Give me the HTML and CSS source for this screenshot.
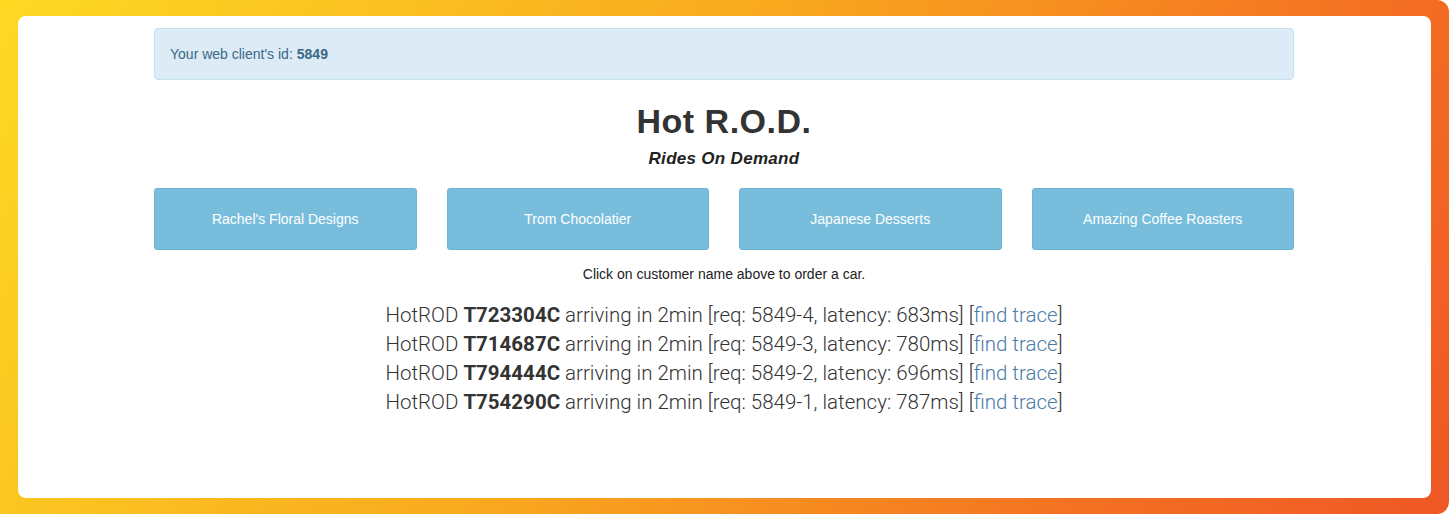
FILE: index.html
```html
<!DOCTYPE html>
<html>
<head>
<meta charset="utf-8">
<link rel="stylesheet" href="styles.css">
<title>Hot R.O.D.</title>
</head>
<body>
<div class="card">
  <div class="container">
    <div class="alert">Your web client's id: <strong>5849</strong></div>
    <h1 class="title">Hot R.O.D.</h1>
    <h4 class="subtitle">Rides On Demand</h4>
    <div class="customers">
      <button class="btn">Rachel's Floral Designs</button>
      <button class="btn">Trom Chocolatier</button>
      <button class="btn">Japanese Desserts</button>
      <button class="btn">Amazing Coffee Roasters</button>
    </div>
    <p class="hint">Click on customer name above to order a car.</p>
    <div class="log">
      <div class="entry">HotROD <b>T723304C</b> arriving in 2min [req: 5849-4, latency: 683ms] [<a href="#">find trace</a>]</div>
      <div class="entry">HotROD <b>T714687C</b> arriving in 2min [req: 5849-3, latency: 780ms] [<a href="#">find trace</a>]</div>
      <div class="entry">HotROD <b>T794444C</b> arriving in 2min [req: 5849-2, latency: 696ms] [<a href="#">find trace</a>]</div>
      <div class="entry">HotROD <b>T754290C</b> arriving in 2min [req: 5849-1, latency: 787ms] [<a href="#">find trace</a>]</div>
    </div>
  </div>
</div>
</body>
</html>
```

FILE: styles.css
```css
* { box-sizing: border-box; }
html { background: #fff; }
body {
  margin: 0;
  height: 514px;
  padding: 16px 18px;
  border-radius: 0 12px 12px 0;
  background: linear-gradient(120deg, #fdd923 0%, #f9a81e 45%, #f46f22 80%, #ef5725 100%);
  font-family: "Liberation Sans", Arial, sans-serif;
  font-size: 14px;
  color: #333;
}
.card {
  background: #fff;
  border-radius: 8px;
  height: 482px;
  padding: 12px 137px 0 136px;
}
.container {
  width: 1140px;
}
.alert {
  height: 52px;
  display: flex;
  align-items: center;
  padding: 0 15px;
  background: #dcebf6;
  border: 1px solid #c4e1ee;
  border-radius: 4px;
  color: #3a6886;
  font-size: 14px;
}
.alert strong { margin-left: 4px; }
.title {
  margin: 21px 0 0;
  text-align: center;
  font-size: 34px;
  font-weight: 700;
  letter-spacing: 0.5px;
  line-height: 40px;
  color: #333;
}
.subtitle {
  margin: 8px 0 0;
  text-align: center;
  font-size: 17px;
  font-style: italic;
  font-weight: 700;
  letter-spacing: 0.3px;
  line-height: 20px;
  color: #222;
}
.customers {
  display: grid;
  grid-template-columns: repeat(4, 1fr);
  gap: 30px;
  margin-top: 19px;
}
.btn {
  height: 62px;
  border: 1px solid #6cb4d4;
  border-radius: 3px;
  background: #78bedc;
  color: #fff;
  font-family: "Liberation Sans", Arial, sans-serif;
  font-size: 14px;
}
.hint {
  margin: 16px 0 0;
  text-align: center;
  font-size: 14px;
  line-height: 16px;
  color: #222;
}
.log {
  margin-top: 19px;
  text-align: center;
  font-family: Roboto, "Liberation Sans", sans-serif;
  font-weight: 300;
  font-size: 20.5px;
  line-height: 29px;
  color: #333;
}
.entry b { font-weight: 700; }
.log a { color: #4a7aa8; text-decoration: none; }
```
